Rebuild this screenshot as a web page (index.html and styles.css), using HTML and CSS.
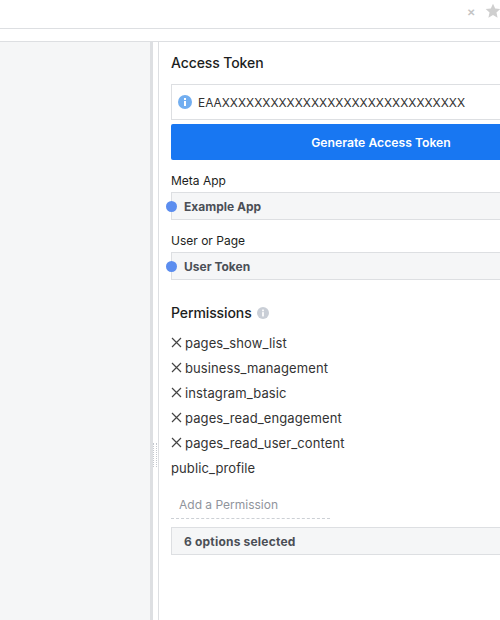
FILE: index.html
```html
<!DOCTYPE html>
<html lang="en">
<head>
    <meta charset="UTF-8">
    <meta name="viewport" content="width=device-width, initial-scale=1.0">
    <title>Graph API Explorer</title>
    <link rel="stylesheet" href="styles.css">
</head>
<body>
    <div class="topbar">
        <span class="clear">&#10005;</span>
        <svg class="star" width="16" height="16" viewBox="0 0 24 24">
            <path d="M12 1l3.3 7.3 7.7.8-5.8 5.2 1.7 7.7-6.9-4-6.9 4 1.7-7.7L1 9.100l7.700-.8z"/>
        </svg>
    </div>
    <div class="subbar"></div>

    <div class="main">
        <div class="sidebar"></div>
        <div class="divider"><span class="grip"></span></div>

        <div class="panel">
            <h2 class="title">Access Token</h2>

            <div class="token-box">
                <svg class="info-icon" width="14" height="14" viewBox="0 0 14 14">
                    <circle cx="7" cy="7" r="7" fill="#72aef0"/>
                    <rect x="6" y="6" width="2" height="5" fill="#fff"/>
                    <rect x="6" y="3" width="2" height="2" fill="#fff"/>
                </svg>
                <span>EAAXXXXXXXXXXXXXXXXXXXXXXXXXXXXXX</span>
            </div>
            <button class="generate-btn">Generate Access Token</button>

            <label class="field-label app-label">Meta App</label>
            <div class="select"><span class="dot"></span>Example App</div>

            <label class="field-label user-label">User or Page</label>
            <div class="select"><span class="dot"></span>User Token</div>

            <h2 class="title permissions-title">
                Permissions
                <svg width="12" height="12" viewBox="0 0 14 14">
                    <circle cx="7" cy="7" r="7" fill="#c9ced6"/>
                    <rect x="6" y="6" width="2" height="5" fill="#fff"/>
                    <rect x="6" y="3" width="2" height="2" fill="#fff"/>
                </svg>
            </h2>

            <ul class="permissions">
                <li><svg class="remove" width="11" height="11" viewBox="0 0 11 11"><path d="M1 1l9 9M10 1l-9 9"/></svg>pages_show_list</li>
                <li><svg class="remove" width="11" height="11" viewBox="0 0 11 11"><path d="M1 1l9 9M10 1l-9 9"/></svg>business_management</li>
                <li><svg class="remove" width="11" height="11" viewBox="0 0 11 11"><path d="M1 1l9 9M10 1l-9 9"/></svg>instagram_basic</li>
                <li><svg class="remove" width="11" height="11" viewBox="0 0 11 11"><path d="M1 1l9 9M10 1l-9 9"/></svg>pages_read_engagement</li>
                <li><svg class="remove" width="11" height="11" viewBox="0 0 11 11"><path d="M1 1l9 9M10 1l-9 9"/></svg>pages_read_user_content</li>
                <li>public_profile</li>
            </ul>

            <div class="add-permission">Add a Permission</div>
            <div class="select options-select">6 options selected</div>
        </div>
    </div>
</body>
</html>
```

FILE: styles.css
```css
html, body {
    height: 100%;
}

* {
    box-sizing: border-box;
}

body {
    width: 500px;
    height: 620px;
    margin: 0;
    display: flex;
    flex-direction: column;
    overflow: hidden;
    font-family: Inter, "Liberation Sans", sans-serif;
    font-size: 13px;
    color: #1c1e21;
    background: #fff;
}

.topbar {
    height: 29px;
    flex: none;
    display: flex;
    align-items: center;
    justify-content: flex-end;
    gap: 10px;
    margin-right: -1px;
    padding-bottom: 4px;
    border-bottom: 1px solid #dddfe2;
}

.clear {
    font-size: 10px;
    font-weight: 700;
    color: #c4c4c4;
}

.star {
    margin-bottom: 3px;
    fill: #cfcfcf;
}

.subbar {
    height: 13px;
    flex: none;
    border-bottom: 1px solid #dddfe2;
}

.main {
    flex: 1;
    display: flex;
    min-height: 0;
}

.sidebar {
    width: 150px;
    flex: none;
    background: #f5f6f7;
}

.divider {
    position: relative;
    width: 9px;
    flex: none;
    border-left: 3px solid #dddfe2;
    border-right: 1px solid #dddfe2;
}

.grip {
    position: absolute;
    left: 0;
    top: 401px;
    width: 4px;
    height: 24px;
    border-left: 1px dotted #c4c8ce;
    border-right: 1px dotted #c4c8ce;
}

.panel {
    width: 432px;
    flex: none;
    padding: 11px 0 0 12px;
}

.title {
    margin: 0;
    font-size: 14px;
    font-weight: 500;
    line-height: 20px;
    letter-spacing: -0.1px;
}

.token-box {
    display: flex;
    align-items: center;
    gap: 6px;
    height: 36px;
    margin-top: 11px;
    padding-left: 6px;
    border: 1px solid #dddfe2;
    font-size: 11.9px;
    color: #333;
}

.generate-btn {
    display: block;
    width: 100%;
    height: 36px;
    margin-top: 4px;
    padding: 0;
    border: none;
    border-radius: 2px;
    background: #1877f2;
    color: #fff;
    font-family: inherit;
    font-size: 12.2px;
    font-weight: 600;
}

.field-label {
    display: block;
    line-height: 16px;
    font-size: 12px;
    color: #1c1e21;
}

.app-label {
    margin-top: 13px;
    margin-bottom: 3px;
}

.user-label {
    margin-top: 13px;
    margin-bottom: 3px;
}

.select {
    position: relative;
    height: 28px;
    padding-left: 12px;
    border: 1px solid #dddfe2;
    background: #f5f6f7;
    font-size: 12px;
    font-weight: 700;
    line-height: 27px;
    color: #4b4f56;
}

.dot {
    position: absolute;
    left: -6px;
    top: 8px;
    width: 11px;
    height: 11px;
    border-radius: 50%;
    background: #5b8def;
}

.permissions-title {
    display: flex;
    align-items: center;
    gap: 5px;
    margin-top: 23px;
}

.permissions {
    margin: 7px 0 0 0;
    padding: 0;
    list-style: none;
    font-size: 13px;
    letter-spacing: 0.1px;
    color: #333;
}

.permissions li {
    display: flex;
    align-items: center;
    height: 25px;
}

.remove {
    flex: none;
    margin-right: 3px;
    fill: none;
    stroke: #444;
    stroke-width: 1.200;
}

.add-permission {
    width: 159px;
    height: 26px;
    margin-top: 13px;
    padding-left: 8px;
    border-bottom: 1px dashed #ccd0d5;
    font-size: 12px;
    line-height: 24px;
    color: #90949c;
}

.options-select {
    margin-top: 8px;
    letter-spacing: 0.2px;
}
```
